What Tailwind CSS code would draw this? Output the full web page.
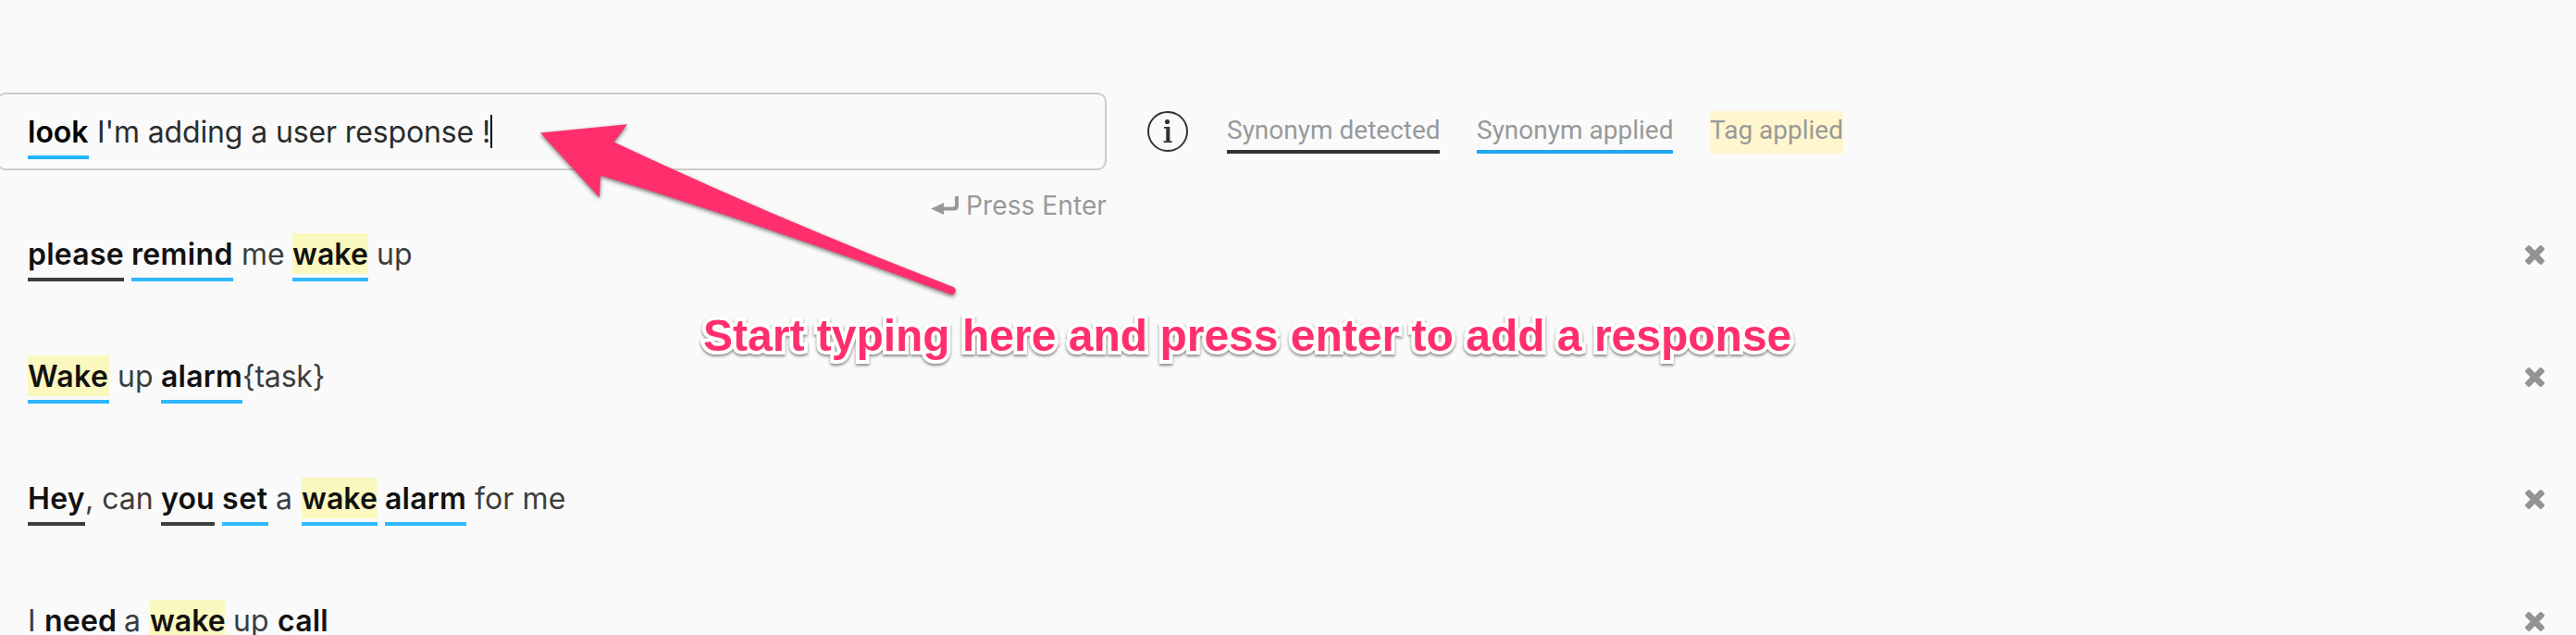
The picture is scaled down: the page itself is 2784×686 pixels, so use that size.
<!DOCTYPE html>
<html lang="en">
<head>
<meta charset="utf-8">
<title>User responses</title>
<script src="https://cdn.jsdelivr.net/npm/@tailwindcss/browser@4"></script>
</head>
<body class="relative h-[686px] w-[2784px] overflow-hidden bg-[#fafafa] font-['Inter',sans-serif] text-[32px] leading-[46px] text-[#3d3d3d]">
<svg class="hidden"><symbol id="remove" viewBox="302 366 1188 1188"><path d="M1490 1322q0 40-28 68l-136 136q-28 28-68 28t-68-28l-294-294-294 294q-28 28-68 28t-68-28l-136-136q-28-28-28-68t28-68l294-294-294-294q-28-28-28-68t28-68l136-136q28-28 68-28t68 28l294 294 294-294q28-28 68-28t68 28l136 136q28 28 28 68t-28 68l-294 294 294 294q28 28 28 68z"/></symbol></svg>

<header class="flex pt-[100px]">
  <div class="-ml-1 w-[1200px]">
    <div class="flex h-[84px] gap-2 whitespace-pre rounded-[10px] border-2 border-[#ccc] pl-8 pt-[18px] text-[#2c2c2c]">
      <span class="h-[52px] w-[66px] border-b-4 border-[#22b4ff] font-semibold text-black">look</span>
      <span class="flex"><span class="ml-px w-[425px] tracking-[-0.13px]">I'm adding a user response !</span><span class="mt-1 h-9 w-0.5 bg-black"></span></span>
    </div>
    <div class="mt-[20px] flex h-[36px] items-center justify-end text-[28px] leading-[36px] text-[#999]">
      <svg class="mr-2 h-5 w-[30px]" viewBox="0 0 30 20" fill="#999"><path d="M0 13.5 14 7v4.5h10q2 0 2-2V0h4v10q0 5.5-5.500 5.500H14V20z"/></svg>
      <span class="tracking-[0.1px]">Press Enter</span>
    </div>
  </div>
  <div class="ml-[44px] flex items-start pt-5 font-['Roboto',sans-serif] text-[28px] leading-[42px] text-[#999]">
    <svg class="h-11 w-11" viewBox="0 0 44 44" fill="none"><circle cx="22" cy="22" r="21" stroke="#333" stroke-width="2"/><circle cx="21.500" cy="11.500" r="2.600" fill="#333"/><path d="M18 17h6.300v15.300H26.500V34h-9v-1.700h2.800V18.700H18z" fill="#333"/></svg>
    <span class="ml-[42px] h-[46px] w-[230px] whitespace-nowrap border-b-4 border-[#333]">Synonym detected</span>
    <span class="ml-10 h-[46px] w-[212px] whitespace-nowrap border-b-4 border-[#22a7f0]">Synonym applied</span>
    <span class="ml-10 h-[46px] w-[144px] whitespace-nowrap bg-[#fff6cf]">Tag applied</span>
  </div>
</header>

<main class="h-[446px] overflow-hidden pt-3">
  <div class="flex h-[132px] items-start justify-between pl-[30px] pr-[34px]">
    <div class="flex gap-2 whitespace-pre">
      <b class="h-[52px] w-[104px] border-b-4 border-[#3d3d3d] font-semibold tracking-[0.25px] text-[#111]">please</b>
      <b class="h-[52px] w-[110px] border-b-4 border-[#2eb8ff] font-semibold tracking-[0.35px] text-[#111]">remind</b>
      <span class="w-12 pl-px">me</span>
      <b class="h-[52px] w-[82px] border-b-4 border-[#2eb8ff] bg-[#fbf8bf] bg-clip-content pb-1 font-semibold tracking-[0.1px] text-[#111]">wake</b>
      <span class="pl-px">up</span>
    </div>
    <svg class="mt-[13px] h-[21px] w-[21px]" fill="#929394"><use href="#remove"/></svg>
  </div>
  <div class="flex h-[132px] items-start justify-between pl-[30px] pr-[34px]">
    <div class="flex whitespace-pre">
      <b class="h-[52px] w-[88px] border-b-4 border-[#2eb8ff] bg-[#fbf8bf] bg-clip-content pb-1 font-semibold tracking-[0.4px] text-[#111]">Wake</b>
      <span class="mx-2 w-10 pl-px">up</span>
      <b class="h-[52px] w-[88px] border-b-4 border-[#2eb8ff] font-semibold tracking-[0.2px] text-[#111]">alarm</b>
      <span class="tracking-[-0.2px]">{task}</span>
    </div>
    <svg class="mt-[13px] h-[21px] w-[21px]" fill="#929394"><use href="#remove"/></svg>
  </div>
  <div class="flex h-[132px] items-start justify-between pl-[30px] pr-[34px]">
    <div class="flex gap-2 whitespace-pre">
      <span class="flex"><b class="h-[52px] w-[62px] border-b-4 border-[#3d3d3d] font-semibold tracking-[0.3px] text-[#111]">Hey</b><span class="w-[74px]">, can</span></span>
      <b class="h-[52px] w-[58px] border-b-4 border-[#3d3d3d] font-semibold tracking-[0.2px] text-[#111]">you</b>
      <b class="h-[52px] w-[50px] border-b-4 border-[#2eb8ff] font-semibold tracking-[0.6px] text-[#111]">set</b>
      <span class="w-5">a</span>
      <b class="h-[52px] w-[82px] border-b-4 border-[#2eb8ff] bg-[#fbf8bf] bg-clip-content pb-1 font-semibold tracking-[0.1px] text-[#111]">wake</b>
      <b class="h-[52px] w-[88px] border-b-4 border-[#2eb8ff] font-semibold tracking-[0.2px] text-[#111]">alarm</b>
      <span class="pl-px tracking-[0.1px]">for me</span>
    </div>
    <svg class="mt-[13px] h-[21px] w-[21px]" fill="#929394"><use href="#remove"/></svg>
  </div>
  <div class="flex h-[132px] items-start justify-between pl-[30px] pr-[34px]">
    <div class="flex gap-2 whitespace-pre">
      <span class="w-[9px]">I</span>
      <b class="w-[79px] pl-px font-semibold tracking-[0.2px] text-[#111]">need</b>
      <span class="w-5">a</span>
      <b class="h-[52px] w-[81px] border-b-4 border-[#2eb8ff] bg-[#fbf8bf] bg-clip-content pb-1 font-semibold text-[#111]">wake</b>
      <span class="w-10 pl-px">up</span>
      <b class="pl-px font-semibold tracking-[0.2px] text-[#111]">call</b>
    </div>
    <svg class="mt-[13px] h-[21px] w-[21px]" fill="#929394"><use href="#remove"/></svg>
  </div>
</main>

<svg class="absolute left-[570px] top-[120px] h-[220px] w-[480px] drop-shadow-[0_2px_2px_rgba(0,0,0,0.5)]" viewBox="570 120 480 220"><path fill="#ff2f6d" d="M584 143.500 678 134.200 663.500 153.500Q846 239 1030 310A4.200 4.200 0 0 1 1027 318Q838 247 649 189.500L648 213.500Z"/></svg>
<p class="absolute left-[760px] top-[335px] whitespace-nowrap font-['Liberation_Sans',Arial,sans-serif] text-[48px] font-bold leading-[56px] text-[#ff2f6d] drop-shadow-[0_2px_1.5px_rgba(0,0,0,0.45)] [-webkit-text-stroke:8px_white] [paint-order:stroke_fill] [stroke-linejoin:round]">Start typing here and press enter to add a response</p>
</body>
</html>
